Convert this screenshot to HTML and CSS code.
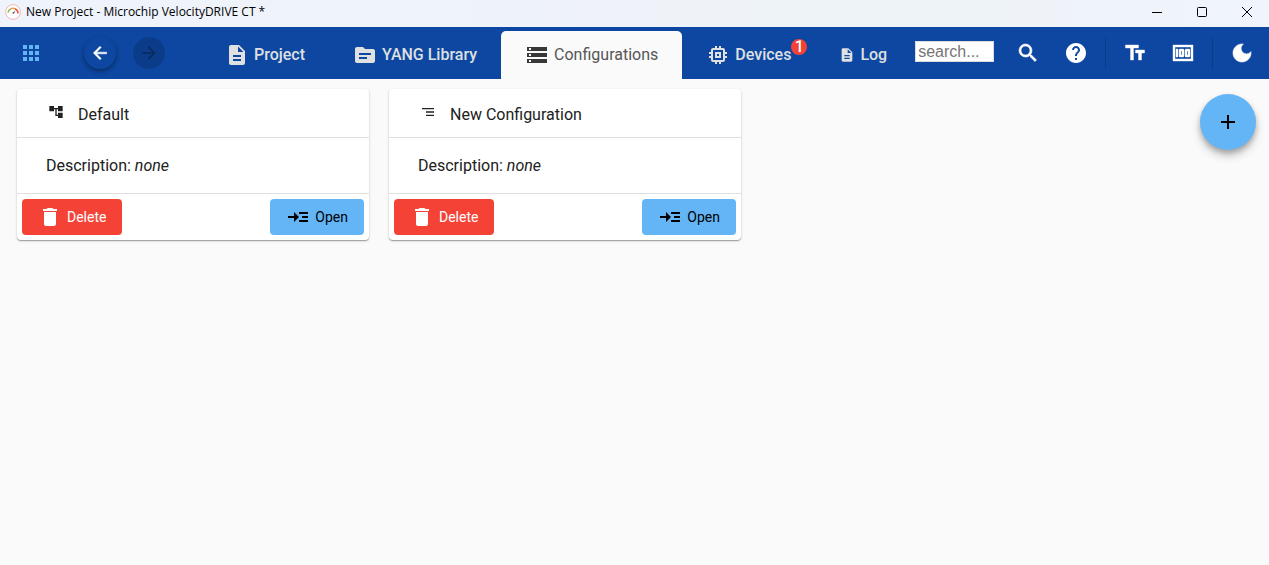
FILE: index.html
```html
<!DOCTYPE html>
<html lang="en">
<head>
<meta charset="utf-8">
<title>New Project - Microchip VelocityDRIVE CT</title>
<link rel="stylesheet" href="styles.css">
</head>
<body>
<svg class="defs" aria-hidden="true">
  <symbol id="i-doc" viewBox="0 0 24 24"><path d="M14 2H6c-1.100 0-2 .9-2 2v16c0 1.100.9 2 2 2h12c1.100 0 2-.9 2-2V8l-6-6zm2 16H8v-2h8v2zm0-4H8v-2h8v2zm-3-5V3.500L18.500 9H13z"/></symbol>
  <symbol id="i-delete" viewBox="0 0 24 24"><path d="M6 19c0 1.100.9 2 2 2h8c1.100 0 2-.9 2-2V7H6v12zM19 4h-3.500l-1-1h-5l-1 1H5v2h14V4z"/></symbol>
  <symbol id="i-open" viewBox="0 0 24 24"><path d="M13 7h9v2h-9zM13 15h9v2h-9zM16 11h6v2h-6zM13 12L8 7v4H2v2h6v4z"/></symbol>
</svg>

<div class="titlebar">
  <svg class="app-logo" viewBox="0 0 16 16" aria-hidden="true">
    <circle cx="8" cy="8" r="7.400" fill="#fff" stroke="#f3b5b5" stroke-width="1"/>
    <path d="M3 8.500a5 5 0 0 1 3-3.800" fill="none" stroke="#8fbf5a" stroke-width="1.600"/>
    <path d="M6 4.700a5 5 0 0 1 4 0" fill="none" stroke="#f0a040" stroke-width="1.600"/>
    <path d="M10 4.700A5 5 0 0 1 13 9.500" fill="none" stroke="#e2574c" stroke-width="1.600"/>
    <path d="M10.500 6.500L8.800 10 7.200 9z" fill="#555"/>
  </svg>
  <span class="window-title">New Project - Microchip VelocityDRIVE CT *</span>
  <div class="window-controls">
    <button class="window-button" aria-label="Minimize"><svg viewBox="0 0 12 12"><path d="M1 6.500h10"/></svg></button>
    <button class="window-button" aria-label="Maximize"><svg viewBox="0 0 12 12"><rect x="1.500" y="1.500" width="9" height="9" rx="1"/></svg></button>
    <button class="window-button" aria-label="Close"><svg viewBox="0 0 12 12"><path d="M1 1l10 10M11 1L1 11"/></svg></button>
  </div>
</div>

<header class="toolbar">
  <div class="history">
    <button class="apps" aria-label="Apps"><svg class="icon" viewBox="0 0 24 24"><path d="M4 8h4V4H4v4zm6 12h4v-4h-4v4zm-6 0h4v-4H4v4zm0-6h4v-4H4v4zm6 0h4v-4h-4v4zm6-10v4h4V4h-4zm-6 4h4V4h-4v4zm6 6h4v-4h-4v4zm0 6h4v-4h-4v4z"/></svg></button>
    <button class="round back" aria-label="Back"><svg class="icon icon-20" viewBox="0 0 24 24"><path stroke="currentColor" stroke-width=".6" d="M20 11H7.830l5.590-5.590L12 4l-8 8 8 8 1.410-1.410L7.830 13H20v-2z"/></svg></button>
    <button class="round forward" aria-label="Forward" disabled><svg class="icon icon-20" viewBox="0 0 24 24"><path d="M12 4l-1.410 1.410L16.170 11H4v2h12.170l-5.580 5.590L12 20l8-8z"/></svg></button>
  </div>
  <nav class="tabs">
    <a class="tab" href="#project"><svg class="icon" aria-hidden="true"><use href="#i-doc"/></svg>Project</a>
    <a class="tab" href="#yang"><svg class="icon" viewBox="0 0 24 24" aria-hidden="true"><path d="M20 6h-8l-2-2H4c-1.100 0-2 .9-2 2v12c0 1.100.9 2 2 2h16c1.100 0 2-.9 2-2V8c0-1.100-.9-2-2-2zm-6 10H6v-2h8v2zm4-4H6v-2h12v2z"/></svg>YANG Library</a>
    <a class="tab tab-active" href="#configurations" aria-current="page"><svg class="icon" viewBox="0 0 24 24" aria-hidden="true"><path d="M2 20h20v-4H2v4zm2-3h2v2H4v-2zM2 4v4h20V4H2zm4 3H4V5h2v2zm-4 7h20v-4H2v4zm2-3h2v2H4v-2z"/></svg>Configurations</a>
    <a class="tab" href="#devices"><svg class="icon" viewBox="0 0 24 24" aria-hidden="true"><path d="M15 9H9v6h6V9zm-2 4h-2v-2h2v2zm8-2V9h-2V7c0-1.100-.9-2-2-2h-2V3h-2v2h-2V3H9v2H7c-1.100 0-2 .9-2 2v2H3v2h2v2H3v2h2v2c0 1.100.9 2 2 2h2v2h2v-2h2v2h2v-2h2c1.100 0 2-.9 2-2v-2h2v-2h-2v-2h2zm-4 6H7V7h10v10z"/></svg><span class="badged">Devices<span class="badge">1</span></span></a>
    <a class="tab" href="#log"><svg class="icon icon-16" aria-hidden="true"><use href="#i-doc"/></svg>Log</a>
  </nav>
  <input class="search" type="text" placeholder="search..." aria-label="Search">
  <div class="tools">
    <button class="tool" aria-label="Search"><svg class="icon" viewBox="0 0 24 24"><path stroke="currentColor" stroke-width=".6" d="M15.500 14h-.79l-.28-.27A6.470 6.470 0 0 0 16 9.500 6.500 6.500 0 1 0 9.500 16c1.610 0 3.090-.59 4.230-1.570l.27.28v.79l5 4.990L20.490 19l-4.990-5zm-6 0C7.010 14 5 11.990 5 9.500S7.010 5 9.500 5 14 7.010 14 9.500 11.990 14 9.500 14z"/></svg></button>
    <button class="tool" aria-label="Help"><svg class="icon" viewBox="0 0 24 24"><path d="M12 2C6.480 2 2 6.480 2 12s4.480 10 10 10 10-4.480 10-10S17.520 2 12 2zm1 17h-2v-2h2v2zm2.070-7.750l-.9.920C13.450 12.900 13 13.500 13 15h-2v-.5c0-1.100.45-2.100 1.170-2.830l1.240-1.260c.37-.36.590-.86.590-1.410 0-1.100-.9-2-2-2s-2 .9-2 2H8c0-2.210 1.790-4 4-4s4 1.790 4 4c0 .88-.36 1.680-.93 2.250z"/></svg></button>
    <span class="divider"></span>
    <button class="tool" aria-label="Text size"><svg class="icon" viewBox="0 0 24 24"><path stroke="currentColor" stroke-width=".4" d="M2.500 4v3h5v12h3V7h5V4h-13zm19 5h-9v3h3v7h3v-7h3V9z"/></svg></button>
    <button class="tool" aria-label="Number format"><svg class="icon" viewBox="0 0 24 24"><path stroke="currentColor" stroke-width=".4" d="M5 8h2v8H5zm7 0H9c-.55 0-1 .45-1 1v6c0 .55.45 1 1 1h3c.55 0 1-.45 1-1V9c0-.55-.45-1-1-1zm-1 6h-1v-4h1v4zm7-6h-3c-.55 0-1 .45-1 1v6c0 .55.45 1 1 1h3c.55 0 1-.45 1-1V9c0-.55-.45-1-1-1zm-1 6h-1v-4h1v4zM2 4v16h20V4H2zm2 14V6h16v12H4z"/></svg></button>
    <span class="divider"></span>
    <button class="tool" aria-label="Dark mode"><svg class="icon" viewBox="0 0 24 24"><path stroke="currentColor" stroke-width=".6" d="M12 3c-4.970 0-9 4.030-9 9s4.030 9 9 9 9-4.030 9-9c0-.46-.04-.92-.1-1.360-.98 1.370-2.580 2.260-4.400 2.260-2.980 0-5.400-2.420-5.400-5.400 0-1.810.89-3.420 2.260-4.400-.44-.06-.9-.1-1.360-.1z"/></svg></button>
  </div>
</header>

<main class="content">
  <section class="cards">
    <article class="card">
      <h2 class="card-title"><svg class="icon icon-16" viewBox="0 0 24 24" aria-hidden="true"><path d="M22 11V3h-7v3H9V3H2v8h7V8h2v10h4v3h7v-8h-7v3h-2V8h2v3z"/></svg>Default</h2>
      <p class="card-body">Description: <em>none</em></p>
      <div class="card-actions">
        <button class="btn btn-delete"><svg class="icon" aria-hidden="true"><use href="#i-delete"/></svg>Delete</button>
        <button class="btn btn-open"><svg class="icon" aria-hidden="true"><use href="#i-open"/></svg>Open</button>
      </div>
    </article>
    <article class="card">
      <h2 class="card-title"><svg class="icon icon-16" viewBox="0 0 24 24" aria-hidden="true"><path d="M9 18h12v-2H9v2zM3 6v2h18V6H3zm6 7h12v-2H9v2z"/></svg>New Configuration</h2>
      <p class="card-body">Description: <em>none</em></p>
      <div class="card-actions">
        <button class="btn btn-delete"><svg class="icon" aria-hidden="true"><use href="#i-delete"/></svg>Delete</button>
        <button class="btn btn-open"><svg class="icon" aria-hidden="true"><use href="#i-open"/></svg>Open</button>
      </div>
    </article>
  </section>
  <button class="fab" aria-label="Add configuration"><svg class="icon" viewBox="0 0 24 24"><path d="M19 13h-6v6h-2v-6H5v-2h6V5h2v6h6v2z"/></svg></button>
</main>
</body>
</html>
```
FILE: styles.css
```css
* {
  box-sizing: border-box;
}

body {
  margin: 0;
  min-height: 100vh;
  background: #fafafa;
  color: #212121;
  font-family: Roboto, "Liberation Sans", sans-serif;
  font-size: 16px;
}

button {
  margin: 0;
  padding: 0;
  border: 0;
  background: none;
  color: inherit;
  font-family: inherit;
}

.defs {
  display: none;
}

.icon {
  display: block;
  flex: none;
  width: 24px;
  height: 24px;
  fill: currentColor;
}

.icon-20 {
  width: 20px;
  height: 20px;
}

.icon-16 {
  width: 16px;
  height: 16px;
}

.titlebar {
  display: flex;
  align-items: center;
  height: 27px;
  padding-left: 5px;
  padding-bottom: 4px;
  background: linear-gradient(90deg, #eff3fb, #eef3f8 75%, #f0f4fc);
  color: #000;
}

.app-logo {
  width: 16px;
  height: 16px;
  margin-right: 5px;
}

.window-title {
  font-family: "Open Sans", "Noto Sans", sans-serif;
  font-size: 12px;
  line-height: 16px;
}

.window-controls {
  display: flex;
  margin-left: auto;
}

.window-button {
  display: grid;
  place-items: center;
  width: 45px;
  height: 22px;
}

.window-button svg {
  width: 12px;
  height: 12px;
  fill: none;
  stroke: #000;
}

.toolbar {
  display: flex;
  align-items: center;
  height: 52px;
  background: #0d47a1;
  color: #fff;
}

.history {
  display: flex;
  align-items: center;
  gap: 17px;
  padding-left: 19px;
}

.apps {
  margin-right: 24px;
  color: #64b5f6;
}

.round {
  display: grid;
  place-items: center;
  width: 32px;
  height: 32px;
  border-radius: 50%;
}

.back {
  box-shadow: 0 2px 5px rgba(0, 0, 0, 0.4);
}

.forward {
  background: rgba(0, 0, 0, 0.15);
  color: rgba(0, 0, 0, 0.3);
}

.tabs {
  display: flex;
  align-self: flex-end;
  margin-left: 36px;
}

.tab {
  display: flex;
  align-items: center;
  gap: 5px;
  height: 48px;
  padding: 0 24px;
  border-radius: 5px 5px 0 0;
  color: #dfe0e2;
  font-weight: 500;
  line-height: 20px;
  text-decoration: none;
  white-space: nowrap;
}

.tab-active {
  background: #fafafa;
  color: #555;
  font-weight: 400;
}

.tab-active .icon {
  color: #383838;
}

.badged {
  position: relative;
}

.badge {
  position: absolute;
  left: 100%;
  top: -6px;
  width: 16px;
  height: 16px;
  border-radius: 50%;
  background: #f44336;
  color: #fff;
  font-size: 16px;
  line-height: 16px;
  text-align: center;
}

.search {
  width: 79px;
  height: 21px;
  margin: 0 9px 3px 4px;
  padding: 0 2px;
  border: 1px solid #dcdcdc;
  background: #fff;
  font-family: "Liberation Sans", Arial, sans-serif;
  font-size: 16px;
}

.search::placeholder {
  color: #757575;
}

.tools {
  display: flex;
  align-items: center;
  margin-left: auto;
  padding-right: 3px;
}

.tool {
  display: grid;
  place-items: center;
  width: 48px;
  height: 48px;
}

.divider {
  width: 1px;
  height: 32px;
  margin: 0 5px;
  background: #0b3c8c;
}

.content {
  display: flex;
  justify-content: space-between;
  align-items: flex-start;
  padding: 10px 13px 10px 17px;
}

.cards {
  display: flex;
  flex-wrap: wrap;
  gap: 20px;
}

.card {
  width: 352px;
  border-radius: 4px;
  background: #fff;
  box-shadow: 0 1px 1px rgba(0, 0, 0, 0.3), 0 1px 3px rgba(0, 0, 0, 0.15);
}

.card-title {
  display: flex;
  align-items: center;
  gap: 14px;
  margin: 0;
  padding: 15px 31px 12px;
  border-bottom: 1px solid #e0e0e0;
  font-size: 16px;
  font-weight: 400;
  line-height: 21px;
}

.card-title .icon {
  margin-bottom: 5px;
}

.card-body {
  margin: 0;
  padding: 18px 29px 17px;
  border-bottom: 1px solid #e0e0e0;
  line-height: 20px;
}

.card-actions {
  display: flex;
  justify-content: space-between;
  padding: 5px;
}

.btn {
  display: flex;
  align-items: center;
  gap: 5px;
  height: 36px;
  padding: 0 16px;
  border-radius: 4px;
  font-size: 14px;
}

.btn-delete {
  background: #f44336;
  color: #fff;
}

.btn-open {
  background: #64b5f6;
  color: #000;
}

.fab {
  display: grid;
  place-items: center;
  flex: none;
  width: 56px;
  height: 56px;
  margin-top: 5px;
  border-radius: 50%;
  background: #64b5f6;
  color: #000;
  box-shadow: 0 3px 5px rgba(0, 0, 0, 0.2), 0 6px 10px rgba(0, 0, 0, 0.2);
}
```
